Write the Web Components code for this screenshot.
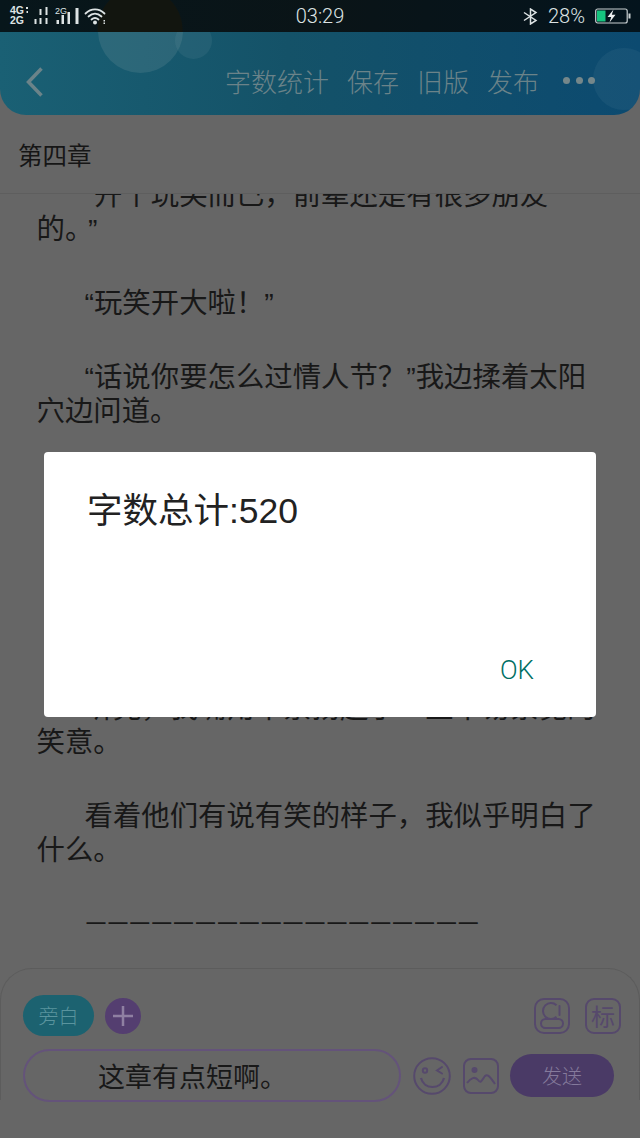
<!DOCTYPE html>
<html lang="zh-CN">
<head>
<meta charset="utf-8">
<title>第四章</title>
<style>
  html, body { margin: 0; background: #666; }
  body { font-family: "Liberation Sans", "Noto Sans CJK SC", sans-serif; }
</style>
</head>
<body>
<app-screen>
  <status-bar></status-bar>
  <app-header></app-header>
  <chapter-title>第四章</chapter-title>
  <story-view>
    <story-para first>“开个玩笑而已，前辈还是有很多朋友<br><span class="flush">的。<span class="gap">”</span></span></story-para>
    <story-para>“玩笑开大啦！”</story-para>
    <story-para>“话说你要怎么过情人节？”我边揉着太阳<br><span class="flush">穴边问道。</span></story-para>
    <story-para hidden-lines="3"></story-para>
    <story-para>听完，我嘴角不禁扬起了一丝不易察觉的<br><span class="flush">笑意。</span></story-para>
    <story-para>看着他们有说有笑的样子，我似乎明白了<br><span class="flush">什么。</span></story-para>
    <story-para rule>——————————————————</story-para>
  </story-view>
  <chat-composer></chat-composer>
  <alert-dialog action="OK">字数总计:520</alert-dialog>
</app-screen>

<script>
class AppScreen extends HTMLElement {
  constructor() {
    super();
    this.attachShadow({ mode: "open" });
    this.shadowRoot.innerHTML = `
      <style>
        :host {
          display: flex;
          flex-direction: column;
          position: relative;
          width: 640px;
          height: 1138px;
          overflow: hidden;
          background: #666;
        }
      </style>
      <slot></slot>
    `;
  }
}

class StatusBar extends HTMLElement {
  constructor() {
    super();
    this.attachShadow({ mode: "open" });
    this.shadowRoot.innerHTML = `
      <style>
        :host {
          display: grid;
          grid-template-columns: 1fr auto 1fr;
          align-items: center;
          flex: none;
          height: 32px;
          background:
            radial-gradient(circle at 140px 30px, #12150f 42px, transparent 43px),
            linear-gradient(90deg, #07161b, #0a1417 50%, #04141d);
          color: #dde3e4;
          font-family: Roboto, "Liberation Sans", sans-serif;
          font-weight: 300;
          font-size: 20px;
        }
        svg { display: block; }
        .right { display: flex; align-items: center; justify-content: flex-end; padding-right: 9px; }
        .pct { margin: 0 10px; }
        .net { font: 700 10.500px/1 "Liberation Sans", sans-serif; fill: #dde3e4; }
      </style>
      <svg width="120" height="32" viewBox="0 0 120 32">
        <text class="net"><tspan x="10" y="14">4G</tspan><tspan x="10" y="23.500">2G</tspan></text>
        <text class="net" x="55" y="13.500" style="font-size:9px;font-weight:400">2G</text>
        <g fill="#dde3e4">
          <rect x="26" y="7" width="2" height="2"/><rect x="26.500" y="11" width="1.500" height="2"/>
          <rect x="34.500" y="19" width="2" height="5"/>
          <rect x="39.500" y="9" width="2" height="6"/><rect x="39.500" y="18" width="2" height="6"/>
          <rect x="45.500" y="7" width="2" height="8"/><rect x="45.500" y="18" width="2" height="6"/>
          <rect x="56.500" y="20" width="2.500" height="4"/>
          <rect x="61.500" y="15" width="2.500" height="9"/>
          <rect x="67.500" y="12" width="2.500" height="12"/>
          <rect x="75.500" y="8" width="3" height="16"/>
          <circle cx="95" cy="22.500" r="2"/>
          <rect x="103.500" y="20" width="1.500" height="1.500"/><rect x="103.500" y="22.500" width="1.500" height="1.500"/>
        </g>
        <g fill="none" stroke="#dde3e4" stroke-width="1.800" stroke-linecap="round">
          <path d="M85.500 13.500C91 8 99 8 104.500 13.500"/>
          <path d="M88.500 16.500C92.500 12.800 97.500 12.800 101.500 16.500"/>
          <path d="M91.500 19.500C93.500 17.800 96.500 17.800 98.500 19.500"/>
        </g>
      </svg>
      <span class="time">03:29</span>
      <div class="right">
        <svg width="15" height="17" viewBox="0 0 15 17" fill="none" stroke="#dde3e4" stroke-width="1.500">
          <path d="M1 4.500L13 12.500L7.500 16V1L13 4.500L1 12.500"/>
        </svg>
        <span class="pct">28%</span>
        <svg width="36" height="16" viewBox="0 0 36 16">
          <rect x="0.700" y="1" width="31.500" height="14" rx="2" fill="none" stroke="#c9d0d2" stroke-width="1.200"/>
          <rect x="2" y="2.500" width="8.500" height="11" fill="#16c47f"/>
          <rect x="33.500" y="5.500" width="2" height="5" fill="#c9d0d2"/>
          <path d="M18.500 1.500L12.500 9H16.200L14.500 14.500L20.500 6.800H16.800Z" fill="#eef1f2"/>
        </svg>
      </div>
    `;
  }
}

class AppHeader extends HTMLElement {
  constructor() {
    super();
    this.attachShadow({ mode: "open" });
    this.shadowRoot.innerHTML = `
      <style>
        :host {
          display: flex;
          align-items: center;
          flex: none;
          position: relative;
          box-sizing: border-box;
          height: 83px;
          padding: 13px 45px 0 26px;
          overflow: hidden;
          border-radius: 0 0 26px 26px;
          background: linear-gradient(90deg, #1a6074, #145268 45%, #0c4a70);
          color: #6b8389;
          font-size: 26px;
          font-family: "Noto Sans CJK SC", sans-serif;
          font-weight: 300;
        }
        .bubble { position: absolute; border-radius: 50%; background: rgba(130, 160, 165, .2); }
        .bubble.one { left: 98px; top: -44px; width: 85px; height: 85px; }
        .bubble.two { left: 175px; top: -10px; width: 37px; height: 37px; background: rgba(120, 160, 170, .13); }
        .bubble.three { left: 593px; top: 16px; width: 62px; height: 62px; background: rgba(120, 160, 180, .1); }
        .back { position: relative; display: block; margin-top: 4px; }
        nav { position: relative; display: flex; align-items: center; gap: 18px; margin-left: auto; }
        .dots { display: flex; gap: 5.500px; margin-left: 6px; }
        .dots i { width: 7px; height: 7px; border-radius: 50%; background: #75878a; }
      </style>
      <span class="bubble one"></span>
      <span class="bubble two"></span>
      <span class="bubble three"></span>
      <svg class="back" width="17" height="30" viewBox="0 0 17 30" fill="none" stroke="#6b8389" stroke-width="3.500">
        <path d="M15.500 1.500L2.500 15L15.500 28.500"/>
      </svg>
      <nav>
        <span>字数统计</span><span>保存</span><span>旧版</span><span>发布</span>
        <div class="dots"><i></i><i></i><i></i></div>
      </nav>
    `;
  }
}

class ChapterTitle extends HTMLElement {
  constructor() {
    super();
    this.attachShadow({ mode: "open" });
    this.shadowRoot.innerHTML = `
      <style>
        :host {
          display: flex;
          align-items: center;
          flex: none;
          height: 77px;
          margin-top: 1px;
          padding-left: 18px;
          border-bottom: 1px solid #5e5e5e;
          color: #161616;
          font-size: 24.500px;
          font-family: "Noto Sans CJK SC", sans-serif;
        }
      </style>
      <slot></slot>
    `;
  }
}

class StoryView extends HTMLElement {
  constructor() {
    super();
    this.attachShadow({ mode: "open" });
    this.shadowRoot.innerHTML = `
      <style>
        :host {
          display: block;
          flex: 1;
          min-height: 0;
          overflow: hidden;
          padding-left: 36.500px;
        }
      </style>
      <slot></slot>
    `;
  }
}

class StoryPara extends HTMLElement {
  constructor() {
    super();
    this.attachShadow({ mode: "open" });
    this.shadowRoot.innerHTML = `
      <style>
        :host {
          display: block;
          position: relative;
          margin-bottom: 40px;
          padding-left: 48px;
          color: #181818;
          font-size: 28.400px;
          line-height: 34px;
          white-space: nowrap;
          font-family: "Liberation Sans", "Noto Sans CJK SC", sans-serif;
        }
        :host([first]) { margin-top: -16px; }
        :host([hidden-lines]) { height: 183px; }
        :host([rule]) { font-size: 19px; font-weight: 700; letter-spacing: 2.900px; margin-left: 2px; margin-top: -2px; }
      </style>
      <slot></slot>
    `;
    // line two of a paragraph goes back to the left edge
    this.querySelectorAll(".flush").forEach((el) => {
      el.style.marginLeft = "-48px";
    });
    this.querySelectorAll(".gap").forEach((el) => {
      el.style.marginLeft = "9px";
    });
  }
}

class ChatComposer extends HTMLElement {
  constructor() {
    super();
    this.attachShadow({ mode: "open" });
    this.shadowRoot.innerHTML = `
      <style>
        :host {
          display: block;
          flex: none;
          position: relative;
          height: 170px;
          box-sizing: border-box;
          padding: 27px 19px 0 23px;
          font-family: "Noto Sans CJK SC", sans-serif;
          font-weight: 300;
        }
        :host::before {
          content: "";
          position: absolute;
          left: 0; right: 0; top: 0;
          height: 132px;
          box-sizing: border-box;
          border: 1px solid #5c5c5c;
          border-bottom: 0;
          border-radius: 32px 32px 0 0;
        }
        .row { position: relative; display: flex; align-items: center; }
        .top { height: 41px; }
        .bottom { height: 53px; margin-top: 13px; }
        svg { display: block; flex: none; }
        .pill {
          display: flex; align-items: center; justify-content: center;
          width: 71px; height: 41px;
          border-radius: 21px;
          background: #1c6270;
          color: #5a949e;
          font-size: 20px;
        }
        .plus {
          display: flex; align-items: center; justify-content: center;
          width: 36px; height: 36px; margin-left: 11px;
          border-radius: 50%;
          background: #543e70;
        }
        .tools { display: flex; gap: 15px; margin-left: auto; }
        .mark {
          display: flex; align-items: center; justify-content: center;
          box-sizing: border-box;
          width: 36px; height: 36px;
          border: 2px solid #56496c;
          border-radius: 9px;
          color: #56496c;
          font-size: 24px;
          font-weight: 400;
        }
        .input {
          display: flex; align-items: center;
          box-sizing: border-box;
          width: 378px; height: 53px;
          padding-left: 73px;
          border: 2px solid #64537a;
          border-radius: 27px;
          color: #181818;
          font-size: 27px;
          font-weight: 400;
        }
        .face { margin-left: 12px; }
        .pic { margin-left: 12px; }
        .send {
          display: flex; align-items: center; justify-content: center;
          width: 104px; height: 43px; margin-left: 11px;
          border-radius: 22px;
          background: #4a3a66;
          color: #857a9c;
          font-size: 20px;
        }
      </style>
      <div class="row top">
        <div class="pill">旁白</div>
        <div class="plus">
          <svg width="22" height="22" viewBox="0 0 22 22" stroke="#8f80a2" stroke-width="2.500">
            <path d="M11 1V21M1 11H21"/>
          </svg>
        </div>
        <div class="tools">
          <svg width="36" height="36" viewBox="0 0 36 36" fill="none" stroke="#56496c" stroke-width="2">
            <rect x="1" y="1" width="34" height="34" rx="9"/>
            <path d="M22.500 7.200A8 8 0 1 0 22.500 18.800"/>
            <path d="M25.500 8V17" stroke-linecap="round"/>
            <rect x="7" y="21" width="22" height="9" rx="4.500"/>
          </svg>
          <div class="mark">标</div>
        </div>
      </div>
      <div class="row bottom">
        <div class="input">这章有点短啊。</div>
        <svg class="face" width="38" height="38" viewBox="0 0 38 38" fill="none" stroke="#56496c" stroke-width="2">
          <circle cx="19" cy="19" r="17.800"/>
          <circle cx="12" cy="13.500" r="2.200"/>
          <path d="M29 10L24 13.500L29 16.500" stroke-linecap="round"/>
          <path d="M8 21C11 33 28 33 31 21" stroke-width="2.200"/>
        </svg>
        <svg class="pic" width="36" height="36" viewBox="0 0 36 36" fill="none" stroke="#56496c" stroke-width="2">
          <rect x="1" y="1" width="34" height="34" rx="7"/>
          <circle cx="11.500" cy="12" r="3" fill="#56496c" stroke="none"/>
          <path d="M4 25C8 20 12 18 15 22C18 26 19 22 22 18C24 16 26 17 32 26"/>
        </svg>
        <div class="send">发送</div>
      </div>
    `;
  }
}

class AlertDialog extends HTMLElement {
  constructor() {
    super();
    this.attachShadow({ mode: "open" });
    const action = this.getAttribute("action") ?? "OK";
    this.shadowRoot.innerHTML = `
      <style>
        :host {
          display: block;
          position: absolute;
          left: 44px;
          top: 452px;
          width: 552px;
          height: 265px;
          box-sizing: border-box;
          padding: 36px 62px 0 43px;
          border-radius: 4px;
          background: #fff;
          color: #222;
          font-size: 35.500px;
          line-height: 46px;
          font-family: "Liberation Sans", "Noto Sans CJK SC", sans-serif;
        }
        .wrap { display: flex; flex-direction: column; height: 100%; }
        .msg { flex: 1; }
        .ok {
          align-self: flex-end;
          margin-bottom: 30px;
          color: #006f64;
          font: 300 26px/34px Roboto, sans-serif;
        }
      </style>
      <div class="wrap">
        <div class="msg"><slot></slot></div>
        <div class="ok">${action}</div>
      </div>
    `;
  }
}

customElements.define("app-screen", AppScreen);
customElements.define("status-bar", StatusBar);
customElements.define("app-header", AppHeader);
customElements.define("chapter-title", ChapterTitle);
customElements.define("story-view", StoryView);
customElements.define("story-para", StoryPara);
customElements.define("chat-composer", ChatComposer);
customElements.define("alert-dialog", AlertDialog);
</script>
</body>
</html>
